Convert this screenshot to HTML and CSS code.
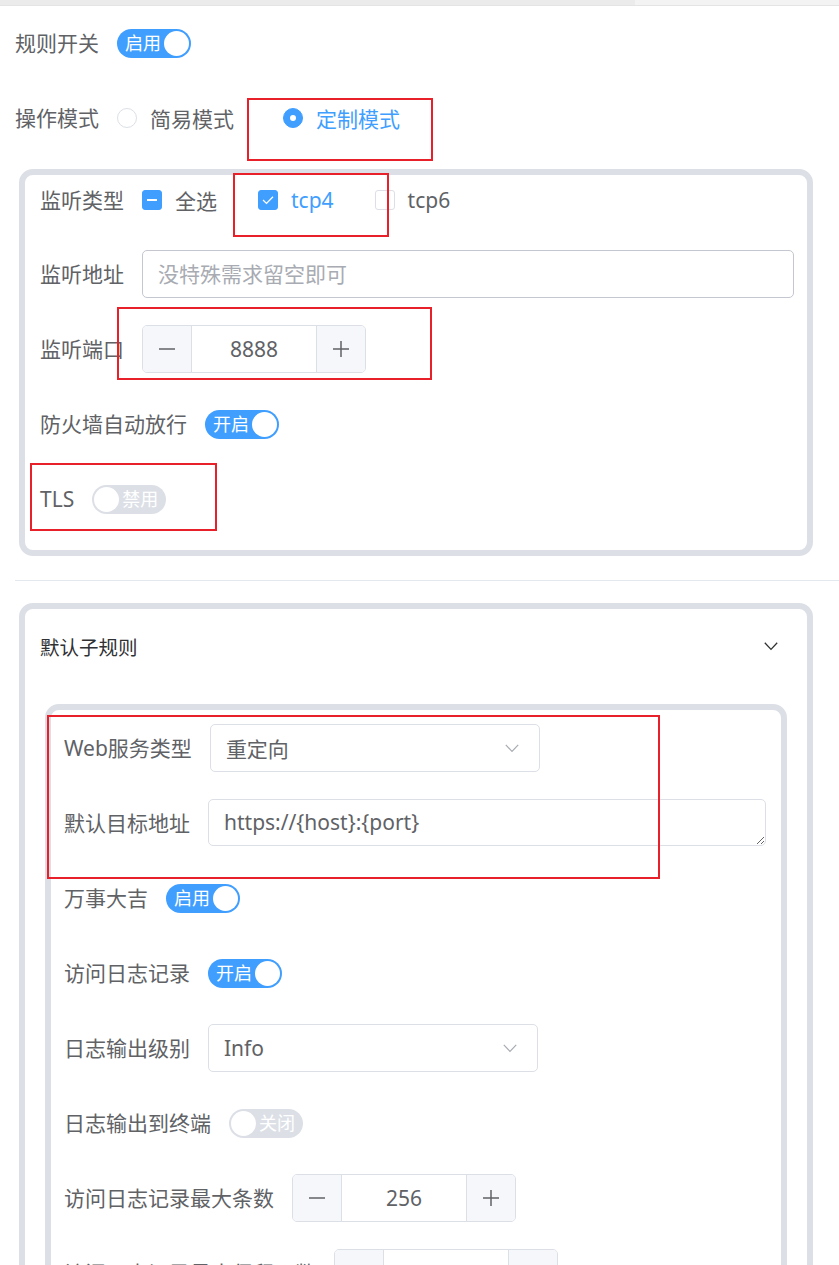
FILE: index.html
```html
<!DOCTYPE html>
<html lang="zh-CN">
  <head>
    <meta charset="UTF-8" />
    <title>规则设置</title>
    <link rel="stylesheet" href="styles.css">
  </head>
  <body>
    <div class="scrollbar"><div class="thumb"></div></div>
    <div class="page">
      <form class="form">
        <div class="item">
          <label class="label">规则开关</label>
          <span class="switch on"><span class="switch-text">启用</span><span class="knob"></span></span>
        </div>

        <div class="item">
          <label class="label">操作模式</label>
          <span class="radio"><span class="radio-dot"></span><span class="radio-text">简易模式</span></span>
          <span class="radio checked"><span class="radio-dot"></span><span class="radio-text">定制模式</span></span>
        </div>

        <div class="card listen">
          <div class="item first">
            <label class="label">监听类型</label>
            <span class="check indeterminate"><span class="box"></span><span class="check-text">全选</span></span>
            <span class="check checked">
              <span class="box">
                <svg viewBox="0 0 20 20" width="20" height="20"><path d="M5 10 L8.5 13.4 L15 6.8" fill="none" stroke="#fff" stroke-width="1.3"/></svg>
              </span>
              <span class="check-text">tcp4</span>
            </span>
            <span class="check"><span class="box"></span><span class="check-text">tcp6</span></span>
          </div>
          <div class="item">
            <label class="label">监听地址</label>
            <input class="input" type="text" placeholder="没特殊需求留空即可">
          </div>
          <div class="item">
            <label class="label">监听端口</label>
            <div class="number">
              <span class="step minus"><svg viewBox="0 0 16 16" width="16" height="16"><path d="M0 8 H16" stroke="#606266" stroke-width="1.5"/></svg></span>
              <span class="number-value">8888</span>
              <span class="step plus"><svg viewBox="0 0 16 16" width="16" height="16"><path d="M0 8 H16 M8 0 V16" stroke="#606266" stroke-width="1.5"/></svg></span>
            </div>
          </div>
          <div class="item">
            <label class="label">防火墙自动放行</label>
            <span class="switch on"><span class="switch-text">开启</span><span class="knob"></span></span>
          </div>
          <div class="item">
            <label class="label">TLS</label>
            <span class="switch off"><span class="knob"></span><span class="switch-text">禁用</span></span>
          </div>
        </div>

        <div class="divider"></div>

        <div class="card collapse">
          <div class="collapse-header">
            <span>默认子规则</span>
            <svg class="arrow" viewBox="0 0 14 9" width="14" height="9"><path d="M0.8 0.8 L7 7.4 L13.2 0.8" fill="none" stroke="#303133" stroke-width="1.3"/></svg>
          </div>
          <div class="collapse-body">
            <div class="card inner">
              <div class="item">
                <label class="label">Web服务类型</label>
                <div class="select">
                  <span>重定向</span>
                  <svg viewBox="0 0 14 9" width="14" height="9"><path d="M0.8 0.8 L7 7.4 L13.2 0.8" fill="none" stroke="#a8abb2" stroke-width="1.2"/></svg>
                </div>
              </div>
              <div class="item top">
                <label class="label">默认目标地址</label>
                <textarea class="textarea" rows="1">https://{host}:{port}</textarea>
              </div>
              <div class="item">
                <label class="label">万事大吉</label>
                <span class="switch on"><span class="switch-text">启用</span><span class="knob"></span></span>
              </div>
              <div class="item">
                <label class="label">访问日志记录</label>
                <span class="switch on"><span class="switch-text">开启</span><span class="knob"></span></span>
              </div>
              <div class="item">
                <label class="label">日志输出级别</label>
                <div class="select">
                  <span>Info</span>
                  <svg viewBox="0 0 14 9" width="14" height="9"><path d="M0.8 0.8 L7 7.4 L13.2 0.8" fill="none" stroke="#a8abb2" stroke-width="1.2"/></svg>
                </div>
              </div>
              <div class="item">
                <label class="label">日志输出到终端</label>
                <span class="switch off"><span class="knob"></span><span class="switch-text">关闭</span></span>
              </div>
              <div class="item">
                <label class="label">访问日志记录最大条数</label>
                <div class="number">
                  <span class="step minus"><svg viewBox="0 0 16 16" width="16" height="16"><path d="M0 8 H16" stroke="#606266" stroke-width="1.5"/></svg></span>
                  <span class="number-value">256</span>
                  <span class="step plus"><svg viewBox="0 0 16 16" width="16" height="16"><path d="M0 8 H16 M8 0 V16" stroke="#606266" stroke-width="1.5"/></svg></span>
                </div>
              </div>
              <div class="item">
                <label class="label">访问日志记录最大保留天数</label>
                <div class="number">
                  <span class="step minus"><svg viewBox="0 0 16 16" width="16" height="16"><path d="M0 8 H16" stroke="#606266" stroke-width="1.5"/></svg></span>
                  <span class="number-value">7</span>
                  <span class="step plus"><svg viewBox="0 0 16 16" width="16" height="16"><path d="M0 8 H16 M8 0 V16" stroke="#606266" stroke-width="1.5"/></svg></span>
                </div>
              </div>
            </div>
          </div>
        </div>
      </form>

      <!-- marcas rojas encima del formulario -->
      <div class="mark mark-mode"></div>
      <div class="mark mark-tcp"></div>
      <div class="mark mark-port"></div>
      <div class="mark mark-tls"></div>
      <div class="mark mark-web"></div>
    </div>
  </body>
</html>
```

FILE: styles.css
```css
html,
body {
  margin: 0;
  height: 1265px;
  overflow: hidden;
}
body {
  font-family: "Noto Sans", "Noto Sans CJK SC", sans-serif;
  background-color: #fff;
  color: #606266;
}
.scrollbar {
  height: 5px;
  background-color: #f3f3f3;
  border-bottom: 1px solid #e4e4e4;
}
.scrollbar .thumb {
  width: 635px;
  height: 5px;
  background-color: #ebebeb;
}
.page {
  position: relative;
  padding: 13px 0 0 15px;
}
.item {
  display: flex;
  align-items: center;
  height: 48px;
  margin-bottom: 27px;
}
.item.first {
  height: 46px;
}
.item.top {
  align-items: flex-start;
}
.label {
  font-size: 21px;
  line-height: 48px;
  padding-right: 18px;
  white-space: nowrap;
  color: #606266;
}

/* switch */
.switch {
  display: inline-flex;
  align-items: center;
  box-sizing: border-box;
  width: 74px;
  height: 29px;
  border-radius: 15px;
  padding: 0 2px;
}
.switch.on {
  background-color: #409eff;
  justify-content: space-between;
  padding-left: 8px;
}
.switch.off {
  background-color: #dcdfe6;
}
.switch-text {
  color: #fff;
  font-size: 18px;
  line-height: 29px;
}
.switch.off .switch-text {
  margin-left: 3px;
}
.knob {
  width: 25px;
  height: 25px;
  border-radius: 50%;
  background-color: #fff;
}

/* radio */
.radio {
  display: inline-flex;
  align-items: center;
  margin-right: 49px;
  font-size: 21px;
}
.radio-dot {
  box-sizing: border-box;
  width: 20px;
  height: 20px;
  border: 1px solid #dcdfe6;
  border-radius: 50%;
  margin-right: 13px;
  background-color: #fff;
}
.radio.checked .radio-dot {
  border-color: #409eff;
  background-color: #409eff;
  position: relative;
}
.radio.checked .radio-dot::after {
  content: "";
  position: absolute;
  left: 6px;
  top: 6px;
  width: 6px;
  height: 6px;
  border-radius: 50%;
  background-color: #fff;
}
.radio.checked .radio-text {
  color: #409eff;
}

/* checkbox */
.check {
  display: inline-flex;
  align-items: center;
  margin-right: 41px;
  font-size: 21px;
}
.check .box {
  box-sizing: border-box;
  width: 20px;
  height: 20px;
  border: 1px solid #dcdfe6;
  border-radius: 3px;
  margin-right: 13px;
  background-color: #fff;
  display: flex;
  align-items: center;
  justify-content: center;
}
.check.checked .box,
.check.indeterminate .box {
  background-color: #409eff;
  border-color: #409eff;
}
.check .box svg {
  display: block;
  flex-shrink: 0;
}
.check.indeterminate .box::after {
  content: "";
  width: 10px;
  height: 2px;
  background-color: #fff;
}
.check.checked .check-text {
  color: #409eff;
}

/* campos */
.input {
  flex: 1;
  box-sizing: border-box;
  height: 48px;
  border: 1px solid #c4c7cf;
  border-radius: 5px;
  padding: 0 15px;
  font-family: inherit;
  font-size: 21px;
  color: #606266;
  outline: none;
}
.input::placeholder {
  color: #a8abb2;
}
.number {
  display: flex;
  box-sizing: border-box;
  width: 224px;
  height: 48px;
  border: 1px solid #dcdfe6;
  border-radius: 5px;
  overflow: hidden;
}
.step {
  width: 48px;
  display: flex;
  align-items: center;
  justify-content: center;
  background-color: #f5f7fa;
}
.step.minus {
  border-right: 1px solid #dcdfe6;
}
.step.plus {
  border-left: 1px solid #dcdfe6;
}
.number-value {
  flex: 1;
  text-align: center;
  font-size: 21px;
  line-height: 46px;
  color: #606266;
}
.select {
  display: flex;
  align-items: center;
  justify-content: space-between;
  box-sizing: border-box;
  width: 330px;
  height: 48px;
  border: 1px solid #dcdfe6;
  border-radius: 5px;
  padding: 0 20px 0 15px;
  font-size: 21px;
  color: #606266;
}
.textarea {
  flex: 1;
  box-sizing: border-box;
  height: 47px;
  border: 1px solid #dcdfe6;
  border-radius: 5px;
  padding: 7px 15px;
  font-family: inherit;
  font-size: 21px;
  line-height: 31px;
  color: #606266;
  resize: vertical;
  outline: none;
  overflow: hidden;
}

/* tarjetas */
.card {
  border: 6px solid #dcdfe6;
  border-radius: 14px;
  background-color: #fff;
}
.listen {
  margin: 0 26px 0 4px;
  padding: 2px 13px 0 15px;
}
.divider {
  height: 1px;
  background-color: #e4e7ed;
  margin: 24px 0 22px;
}
.collapse {
  margin: 0 26px 0 4px;
}
.collapse-header {
  display: flex;
  align-items: center;
  justify-content: space-between;
  height: 75px;
  padding: 0 29px 0 15px;
  font-size: 19.5px;
  color: #303133;
}
.collapse-header .arrow {
  display: block;
}
.collapse-body {
  padding: 20px 20px 0 20px;
}
.inner {
  padding: 14px 15px 0 13px;
}

/* marcas */
.mark {
  position: absolute;
  box-sizing: border-box;
  border: 2px solid #e8202a;
}
.mark-mode {
  left: 247px;
  top: 92px;
  width: 186px;
  height: 63px;
}
.mark-tcp {
  left: 233px;
  top: 167px;
  width: 156px;
  height: 64px;
}
.mark-port {
  left: 117px;
  top: 301px;
  width: 315px;
  height: 73px;
}
.mark-tls {
  left: 30px;
  top: 457px;
  width: 187px;
  height: 68px;
}
.mark-web {
  left: 47px;
  top: 709px;
  width: 613px;
  height: 164px;
}
```
